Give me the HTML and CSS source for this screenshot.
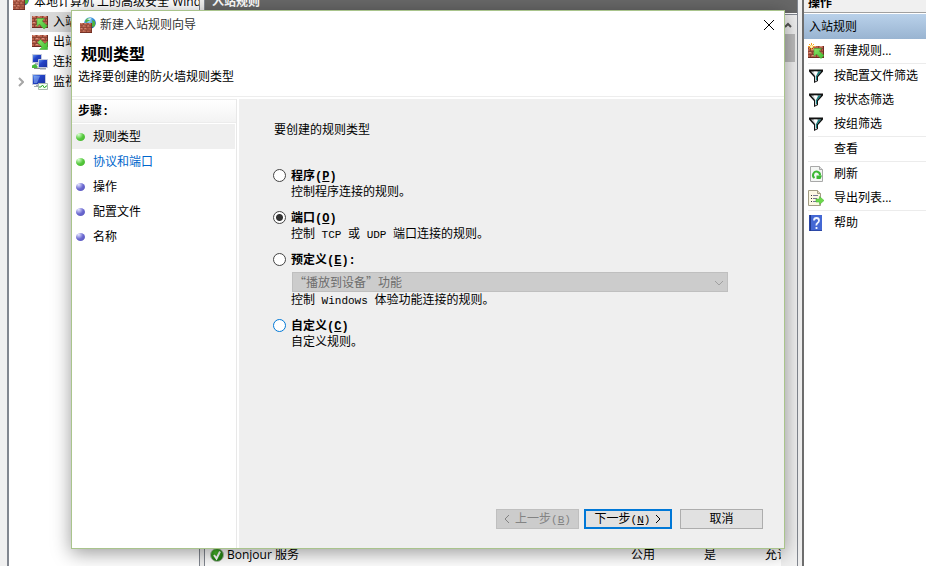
FILE: index.html
```html
<!DOCTYPE html>
<html lang="zh-CN">
<head>
<meta charset="utf-8">
<title>新建入站规则向导</title>
<link rel="stylesheet" href="styles.css">
</head>
<body>
<svg class="defs" aria-hidden="true">
  <defs>
    <linearGradient id="glass" x1="0" y1="0" x2="1" y2="1"><stop offset="0" stop-color="#6fa4f4"/><stop offset=".4" stop-color="#2444c8"/><stop offset="1" stop-color="#1a2f9c"/></linearGradient>
    <radialGradient id="globe" cx=".4" cy=".3" r=".8"><stop offset="0" stop-color="#a8dcf8"/><stop offset=".5" stop-color="#2f8ad8"/><stop offset="1" stop-color="#0c3c94"/></radialGradient>
    <radialGradient id="ok" cx=".4" cy=".3" r=".8"><stop offset="0" stop-color="#4cc02c"/><stop offset="1" stop-color="#106a08"/></radialGradient>
    <linearGradient id="arrow" x1="0" y1="0" x2="1" y2="1"><stop offset="0" stop-color="#8ee468"/><stop offset="1" stop-color="#3cbc30"/></linearGradient>
    <symbol id="bricks" viewBox="0 0 16 12" preserveAspectRatio="none">
      <rect width="16" height="12" fill="#8c4434"/>
      <path d="M0 0h4v2H0zM5 0h5v2H5zM11 0h5v2h-5zM0 3h2v2H0zM3 3h5v2H3zM9 3h4v2H9zM14 3h2v2h-2zM0 6h4v2H0zM5 6h5v2H5zM11 6h5v2h-5zM0 9h2v2H0zM3 9h5v2H3zM9 9h4v2H9zM14 9h2v2h-2z" fill="#b8604a"/>
      <path d="M1 0h2v1H1zM6 0h2v1H6zM12 0h2v1h-2zM4 3h2v1H4zM10 3h2v1h-2zM1 6h2v1H1zM6 6h2v1H6zM4 9h2v1H4z" fill="#d89484"/>
      <path d="M0 11h16v1H0zM15 0h1v12h-1z" fill="#6c2c22"/>
    </symbol>
    <symbol id="wall-globe" viewBox="0 0 16 16">
      <circle cx="10" cy="6" r="5.800" fill="url(#globe)"/>
      <path d="M5 4Q7 .6 9.500 1L10.500 2.500 9 4 7.500 4.500 6 6zM12 3l3 1.500v4l-2 2-1.500-2.500 1-2z" fill="#4db53c"/>
      <path d="M7 2.500Q9 .8 11.500 1.500L10 3z" fill="#dff4ff"/>
      <use href="#bricks" x="0" y="6" width="12" height="10"/>
    </symbol>
    <symbol id="inbound" viewBox="0 0 16 16">
      <use href="#bricks" x="0" y="2" width="16" height="12"/>
      <path d="M5 4.500h7.500l-2.500 2.500 5.500 5-3.500 3-4.500-5-2.500 2.500z" fill="url(#arrow)" stroke="#46a838" stroke-width=".6"/>
    </symbol>
    <symbol id="outbound" viewBox="0 0 16 16">
      <use href="#bricks" x="0" y="1" width="16" height="12"/>
      <path d="M8.500 5.500l4.500 4.500 2.500-2.500v8H7.500l2.500-2.500-4.500-4.500z" fill="url(#arrow)" stroke="#46a838" stroke-width=".6"/>
    </symbol>
    <symbol id="new-rule" viewBox="0 0 16 16">
      <use href="#bricks" x="0" y="3" width="16" height="12"/>
      <path d="M6 5.500h7.500l-2.500 2.500 5 4.500-3 3-4.500-4.500-2.500 2.500z" fill="url(#arrow)" stroke="#46a838" stroke-width=".6"/>
      <path d="M3.500 0v7M0 3.500h7M1 1l5 5M6 1L1 6" stroke="#f5a623"/><circle cx="3.500" cy="3.500" r="1.500" fill="#fff6b8"/>
    </symbol>
    <symbol id="computers" viewBox="0 0 16 16">
      <path d="M.5 .5h9v8h-9z" fill="url(#glass)" stroke="#c4cadc"/><path d="M3 9h4v2H3z" fill="#a8aeb8"/>
      <path d="M6.500 5.500h9v8h-9z" fill="url(#glass)" stroke="#c4cadc"/><path d="M8 14h6v1.500H8z" fill="#9aa2ac"/>
      <path d="M0 11.500l3-1.500 2.500 2v2H0z" fill="#48b83c"/><path d="M2 14.500h6" stroke="#888"/>
    </symbol>
    <symbol id="monitor" viewBox="0 0 16 16">
      <path d="M.5 .5h13v10H.500z" fill="url(#glass)" stroke="#c4cadc"/><path d="M2 2h6L5 9H2z" fill="#a9cfff" opacity=".45"/>
      <path d="M4 11h4v2H2v-1h2z" fill="#a0a8b0"/>
      <path d="M6.500 9.500h9v6h-9z" fill="#f2fff2" stroke="#a8b8ac"/><path d="M7 13h2l1.500-2 2 3 1.500-2h1" fill="none" stroke="#2fa82c"/>
    </symbol>
    <symbol id="filter" viewBox="0 0 16 16">
      <path d="M1 1.500h14v2L10 9v4l-4 2V9L1 3.500z" fill="#111"/>
      <path d="M3 3.500h10L9 8v4.500l-2 1V8z" fill="#c8d0d2"/>
      <path d="M5.500 3.500h4L8.500 8h-1z" fill="#fff"/><path d="M10.500 3.500H13L9 8v4H8V8z" fill="#168080"/>
    </symbol>
    <symbol id="refresh" viewBox="0 0 16 16">
      <path d="M2.500 .5h9l3 3v12h-12z" fill="#f4f6f4" stroke="#a8a8a8"/><path d="M11.500 .5v3h3" fill="#ddd" stroke="#a8a8a8"/>
      <path d="M6.500 12A3.500 3.500 0 1 1 12 9.500" fill="none" stroke="#3cb834" stroke-width="2"/><path d="M8.500 9.500H14L12.500 13H8.500z" fill="#3cb834"/>
    </symbol>
    <symbol id="export" viewBox="0 0 16 16">
      <path d="M.5 .5h9l3 3v12H.5z" fill="#fcf8e4" stroke="#a39d84"/><path d="M9.500 .5v3h3" fill="#e4ddc0" stroke="#a39d84"/>
      <path d="M3 5.500h1M3 8.500h1M3 11.500h1" stroke="#333"/><path d="M5 5.500h5M5 8.500h4M5 11.500h4" stroke="#777796"/>
      <path d="M8 9h3.500V6.500l4.500 4-4.500 4V12H8z" fill="#6cd94a" stroke="#4ab836" stroke-width=".6"/>
    </symbol>
    <symbol id="help" viewBox="0 0 16 16">
      <path d="M1 0h13v16H1z" fill="#2c48a8"/><path d="M3 0h11v15H3z" fill="#4468d4"/><path d="M2.500 0v16" stroke="#20388c"/>
      <path d="M6 5.500Q6 3 8.500 3T11 5.500Q11 7 9.500 8T8.500 10.500M8.500 12v2" fill="none" stroke="#f0f4ff" stroke-width="1.800"/>
    </symbol>
    <symbol id="ok-mark" viewBox="0 0 16 16">
      <circle cx="8" cy="8" r="6.500" fill="url(#ok)" stroke="#b4beb0"/><path d="M5 8l2.500 3.500L11 4.500" fill="none" stroke="#fff" stroke-width="2"/>
    </symbol>
  </defs>
</svg>

<div class="workspace">
  <nav class="tree">
    <div class="tree-row root"><svg class="icon"><use href="#wall-globe"/></svg><span>本地计算机 上的高级安全 Windows 防火墙</span></div>
    <div class="tree-row"><span class="tree-item selected"><svg class="icon"><use href="#inbound"/></svg>入站规则</span></div>
    <div class="tree-row"><span class="tree-item"><svg class="icon"><use href="#outbound"/></svg>出站规则</span></div>
    <div class="tree-row"><span class="tree-item"><svg class="icon"><use href="#computers"/></svg>连接安全规则</span></div>
    <div class="tree-row"><svg class="twisty" viewBox="0 0 6 10"><path d="M1 1l4 4-4 4"/></svg><span class="tree-item"><svg class="icon"><use href="#monitor"/></svg>监视</span></div>
  </nav>
  <main class="rules">
    <h2 class="rules-title">入站规则</h2>
    <div class="rules-view">
      <div class="rules-list">
        <table>
          <tr><td class="col-name"><svg class="icon"><use href="#ok-mark"/></svg>Bonjour 服务</td><td class="col-profile">公用</td><td class="col-enabled">是</td><td class="col-action">允许</td></tr>
        </table>
      </div>
      <div class="scrollbar"><svg class="scroll-up" viewBox="0 0 8 6"><path d="M1 5l3-3 3 3"/></svg><div class="thumb"></div></div>
    </div>
  </main>
  <aside class="actions">
    <h2 class="actions-title">操作</h2>
    <h3 class="actions-section">入站规则</h3>
    <ul>
      <li><a href="#"><svg class="icon"><use href="#new-rule"/></svg>新建规则...</a></li>
      <li class="divided"><a href="#"><svg class="icon"><use href="#filter"/></svg>按配置文件筛选</a></li>
      <li><a href="#"><svg class="icon"><use href="#filter"/></svg>按状态筛选</a></li>
      <li><a href="#"><svg class="icon"><use href="#filter"/></svg>按组筛选</a></li>
      <li class="divided"><a href="#"><span class="icon"></span>查看</a></li>
      <li class="divided"><a href="#"><svg class="icon"><use href="#refresh"/></svg>刷新</a></li>
      <li><a href="#"><svg class="icon"><use href="#export"/></svg>导出列表...</a></li>
      <li class="divided"><a href="#"><svg class="icon"><use href="#help"/></svg>帮助</a></li>
    </ul>
  </aside>
</div>

<form class="dialog" role="dialog" aria-labelledby="dialog-title">
  <header class="titlebar">
    <svg class="icon"><use href="#wall-globe"/></svg>
    <span id="dialog-title">新建入站规则向导</span>
    <button type="button" class="close" aria-label="关闭"><svg viewBox="0 0 12 12"><path d="M1 1l10 10M11 1L1 11"/></svg></button>
  </header>
  <div class="intro">
    <h1>规则类型</h1>
    <p>选择要创建的防火墙规则类型</p>
  </div>
  <div class="dialog-body">
    <nav class="steps">
      <h2>步骤<span class="mono">:</span></h2>
      <ol>
        <li class="current reached">规则类型</li>
        <li class="reached"><a href="#">协议和端口</a></li>
        <li>操作</li>
        <li>配置文件</li>
        <li>名称</li>
      </ol>
    </nav>
    <section class="page">
      <p class="question">要创建的规则类型</p>
      <div class="options">
        <div class="option">
          <input type="radio" name="type" id="program">
          <label for="program">程序<span class="mono">(<u>P</u>)</span></label>
          <p>控制程序连接的规则。</p>
        </div>
        <div class="option">
          <input type="radio" name="type" id="port" checked>
          <label for="port">端口<span class="mono">(<u>O</u>)</span></label>
          <p>控制<span class="mono"> TCP </span>或<span class="mono"> UDP </span>端口连接的规则。</p>
        </div>
        <div class="option">
          <input type="radio" name="type" id="predefined">
          <label for="predefined">预定义<span class="mono">(<u>E</u>):</span></label>
          <div class="dropdown">
            <select disabled aria-label="预定义"><option>“播放到设备”功能</option></select>
            <svg viewBox="0 0 10 6"><path d="M1 1l4 4 4-4"/></svg>
          </div>
          <p>控制<span class="mono"> Windows </span>体验功能连接的规则。</p>
        </div>
        <div class="option">
          <input type="radio" name="type" id="custom" class="hot">
          <label for="custom">自定义<span class="mono">(<u>C</u>)</span></label>
          <p>自定义规则。</p>
        </div>
      </div>
      <footer>
        <button type="button" class="back" disabled><svg viewBox="0 0 6 10"><path d="M5 1L1 5l4 4"/></svg><span>上一步<span class="mono">(<u>B</u>)</span></span></button>
        <button type="button" class="next"><span>下一步<span class="mono">(<u>N</u>)</span></span><svg viewBox="0 0 6 10"><path d="M1 1l4 4-4 4"/></svg></button>
        <button type="button">取消</button>
      </footer>
    </section>
  </div>
</form>
</body>
</html>
```
FILE: styles.css
```css
* { box-sizing: border-box; }

body {
  margin: 0;
  height: 100vh;
  overflow: hidden;
  background: #f0f0f0;
  color: #000;
  font: 12px/16px "Open Sans", "Noto Sans CJK SC", sans-serif;
}

h1, h2, h3, p, ul, ol { margin: 0; padding: 0; font-size: 12px; font-weight: normal; }
ul, ol { list-style: none; }
a { color: inherit; text-decoration: none; }
button, select { font: inherit; color: inherit; }
svg { display: block; flex: none; fill: none; }
.defs { position: absolute; width: 0; height: 0; }
.icon { width: 16px; height: 16px; flex: none; }

/* Console window behind the wizard, scrolled slightly past its top */
.workspace {
  display: grid;
  grid-template-columns: 193px minmax(0, 1fr) 124px;
  gap: 4px;
  height: calc(100vh + 8px);
  margin-top: -8px;
  padding-left: 7px;
}

.tree {
  overflow: hidden;
  background: #fff;
  border: solid #828790;
  border-width: 0 1px 0 2px;
}
.tree-row { position: relative; display: flex; align-items: center; height: 20px; padding-left: 21px; white-space: nowrap; }
.tree-row.root { gap: 5px; padding-left: 4px; }
.tree-item { display: flex; align-items: center; gap: 5px; height: 20px; padding: 0 2px; }
.selected { background: #d9d9d9; }
.twisty { position: absolute; left: 9px; width: 6px; height: 10px; stroke: #a6a6a6; stroke-width: 2; }

.rules { display: flex; flex-direction: column; min-width: 0; border: solid #828790; border-width: 0 1px; background: #fff; }
.rules-title { height: 21px; padding: 2px 7px; background: #686868; color: #fff; font-weight: bold; }
.rules-view { display: flex; flex: 1; margin-top: 1px; border-top: 1px solid #828790; }
.rules-list { display: flex; flex: 1; align-items: flex-end; min-width: 0; overflow: hidden; }
.rules-list table { width: 100%; table-layout: fixed; border-spacing: 0; }
.rules-list td { height: 20px; padding: 0 0 2px; overflow: hidden; white-space: nowrap; }
.col-name { display: flex; align-items: center; gap: 2px; }
.rules-list .col-name { padding-left: 4px; }
.col-profile { width: 73px; }
.col-enabled { width: 61px; }
.col-action { width: 16px; }
.scrollbar { width: 16px; padding-top: 7px; background: #f0f0f0; }
.scroll-up { width: 8px; height: 6px; margin: 0 0 6px 3px; stroke: #555; stroke-width: 2; }
.thumb { height: 28px; margin-right: 2px; background: #bdbdbd; }

.actions { background: #fff; border-left: 2px solid #6e6e6e; }
.actions-title { height: 21px; padding: 3px 4px; background: #f0f0f0; border-bottom: 1px solid #a0a0a0; font-weight: bold; }
.actions-section { height: 25px; margin-top: 1px; padding: 5px; background: linear-gradient(#b9d1ea, #99b4d1); }
.actions ul { padding-left: 4px; }
.actions a { display: flex; align-items: center; gap: 10px; height: 24px; white-space: nowrap; }
.divided { border-top: 1px solid #ececec; }

/* Wizard window floats over the console */
.dialog {
  position: absolute;
  inset: 10px 141px 17px 71px;
  display: flex;
  flex-direction: column;
  background: #fff;
  border: 1px solid #a9c48c;
  box-shadow: 0 4px 18px rgba(0, 0, 0, .4);
}
.titlebar { display: flex; align-items: center; gap: 4px; height: 28px; padding: 0 9px 0 8px; color: #333; }
.close { width: 12px; height: 12px; margin-left: auto; padding: 0; border: 0; background: none; }
.close svg { stroke: #000; }
.intro { height: 57px; padding: 5px 6px; }
.intro h1 { padding-left: 3px; font-size: 16px; line-height: 20px; font-weight: bold; }
.intro p { padding-top: 5px; }
.dialog-body { display: flex; flex: 1; gap: 2px; padding-top: 2px; border-top: 1px solid #ededed; }

.steps { width: 165px; border-right: 1px solid #e8e8e8; }
.steps h2 { height: 24px; padding: 3px 6px; font-weight: bold; background: linear-gradient(#fff, #f3f3f3); border: solid #ececec; border-width: 1px 0; }
.steps ol { padding: 1px 1px 0 0; }
.steps li { display: flex; align-items: center; gap: 8px; height: 25px; padding-left: 4px; }
.steps li::before {
  content: "";
  width: 9px;
  height: 8px;
  border-radius: 50%;
  background: radial-gradient(circle at 30% 20%, #e4e4ff, #6a68d0 50%, #5654b8);
}
.steps .reached::before { background: radial-gradient(circle at 30% 20%, #d8ffd0, #54c83c 50%, #44b02c); }
.steps .current { background: #efefef; }
.steps a { color: #0066cc; }

.page { display: flex; flex: 1; flex-direction: column; padding: 23px 21px 19px 34px; background: #efefef; }
.question { padding-left: 1px; }
.options { display: grid; gap: 10px; margin-top: 30px; }
.option { display: grid; grid-template-columns: 13px minmax(0, 1fr); column-gap: 5px; }
.option label { font-weight: bold; }
.option p { grid-column: 2; }
.option input {
  appearance: none;
  width: 13px;
  height: 13px;
  margin: 1px 0;
  border: 1px solid #444;
  border-radius: 50%;
  background: #fff;
}
.option input:checked { background: radial-gradient(circle, #333 3px, #fff 4px); }
.option .hot { border-color: #0078d7; }

.mono { font-family: "Liberation Mono", monospace; font-size: 11px; line-height: 1; white-space: pre; }
label .mono, .steps .mono { font-size: 12px; }

.dropdown { position: relative; grid-column: 2; margin: 4px 35px 0 1px; }
.dropdown select {
  display: block;
  appearance: none;
  width: 100%;
  height: 20px;
  padding: 0 1px;
  border: 1px solid #bfbfbf;
  border-radius: 0;
  background: #ccc;
  color: #6d6d6d;
  font-family: "Noto Sans CJK SC", sans-serif;
  opacity: 1;
}
.dropdown svg { position: absolute; right: 4px; top: 8px; width: 10px; height: 6px; stroke: #a0a0a0; }

.page footer { display: flex; justify-content: flex-end; gap: 8px; margin-top: auto; }
.page footer button {
  display: flex;
  align-items: center;
  justify-content: center;
  gap: 5px;
  width: 83px;
  height: 20px;
  padding: 0;
  border: 1px solid #adadad;
  background: #e1e1e1;
}
.page footer svg { width: 6px; height: 10px; stroke: currentColor; }
.page footer .back { margin-right: -3px; border-color: #bfbfbf; background: #ccc; color: #838383; }
.page footer .next { width: 88px; border: 2px solid #0078d7; }
```
